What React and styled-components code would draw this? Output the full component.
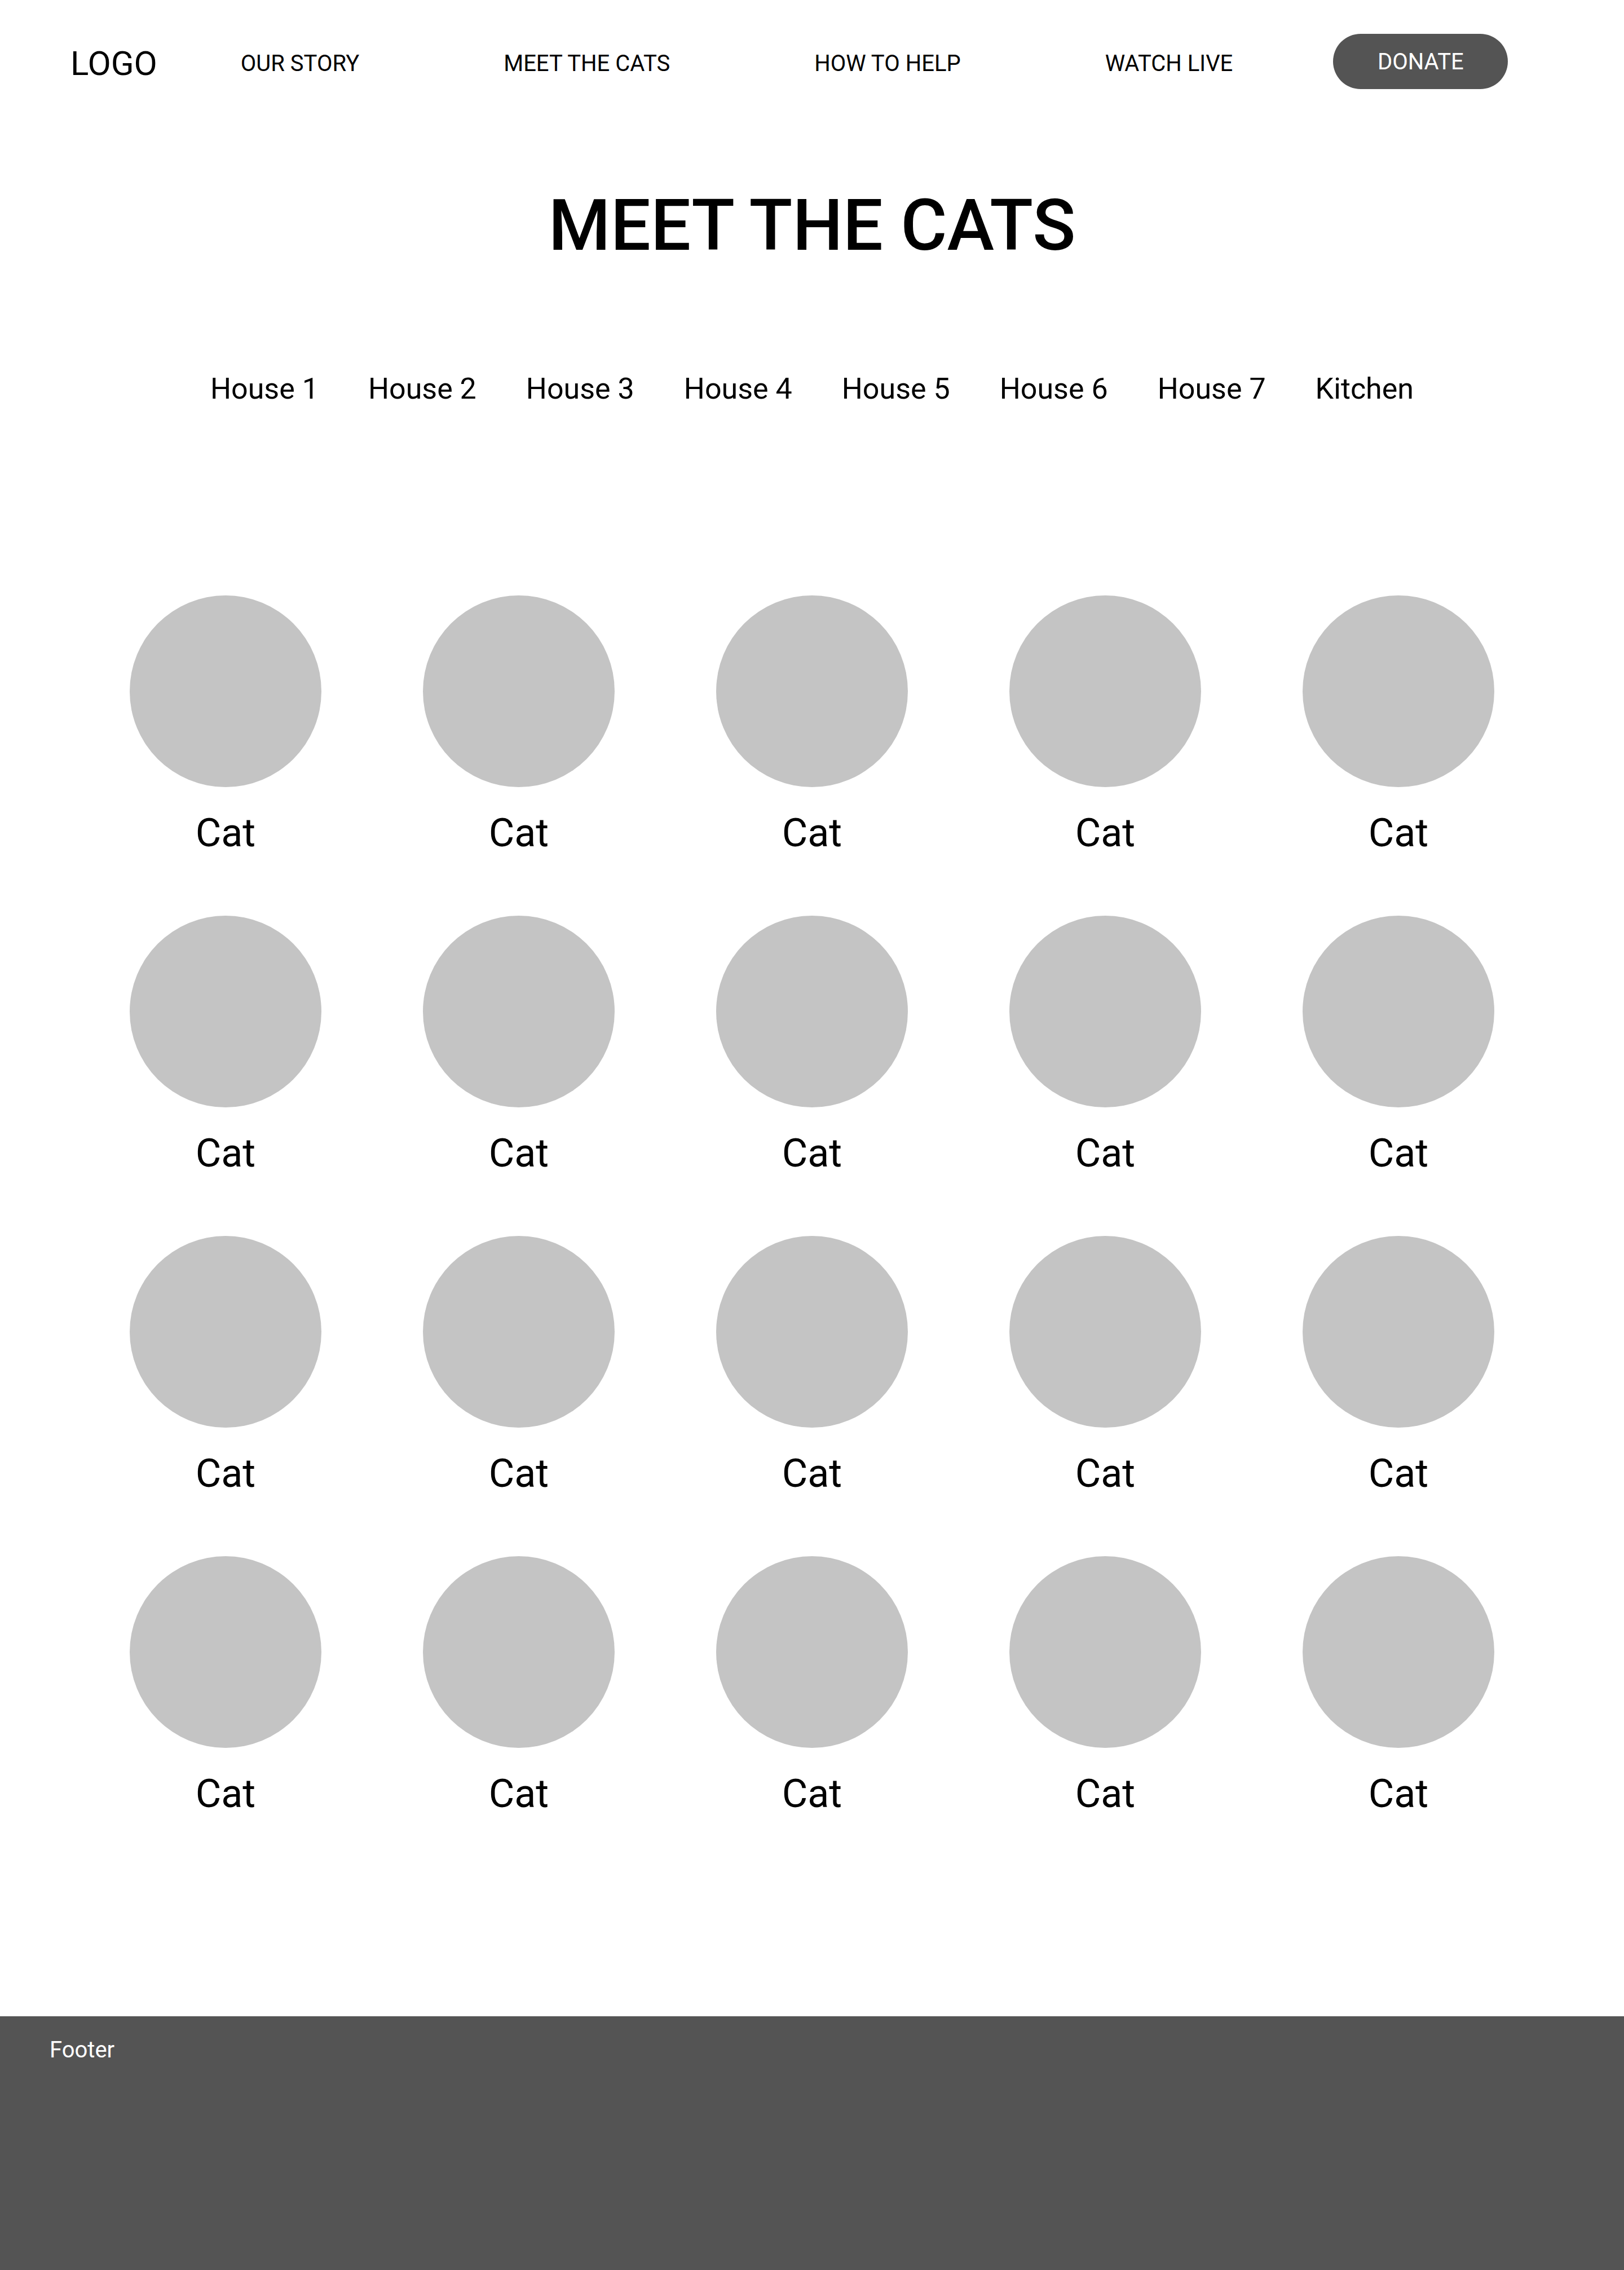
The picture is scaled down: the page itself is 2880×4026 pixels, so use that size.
import React from 'react'
import styled, { createGlobalStyle } from 'styled-components'

const GlobalStyle = createGlobalStyle`
    * { box-sizing: border-box; }
    body {
        margin: 0;
        background: #fff;
        font-family: Roboto, "Liberation Sans", Arial, sans-serif;
        color: #000;
    }
`;

const houses = ['House 1', 'House 2', 'House 3', 'House 4', 'House 5', 'House 6', 'House 7', 'Kitchen'];
const cats = Array.from({ length: 20 }, () => 'Cat');

const Page = styled.div`
    width: 2880px;
    min-height: 4026px;
    display: flex;
    flex-direction: column;
`;

const Header = styled.header`
    display: flex;
    align-items: center;
    height: 98px;
    margin-top: 60px;
    padding-left: 125px;
`;

const Logo = styled.div`
    font-size: 60px;
    font-weight: 400;
    margin-right: 148px;
    padding-top: 6px;
`;

const Nav = styled.nav`
    display: flex;
    gap: 256px;
    padding-top: 6px;
`;

const NavLink = styled.a`
    font-size: 40px;
    color: #000;
    text-decoration: none;
`;

const Donate = styled.button`
    margin-left: 178px;
    width: 310px;
    height: 98px;
    border: none;
    border-radius: 49px;
    background: #545454;
    color: #fff;
    font-family: inherit;
    font-size: 40px;
    font-weight: 400;
`;

const Title = styled.h1`
    margin: 168px 0 0;
    text-align: center;
    font-size: 126px;
    font-weight: 500;
`;

const Tabs = styled.div`
    display: flex;
    justify-content: center;
    gap: 88px;
    margin-top: 185px;
    font-size: 52px;
`;

const Grid = styled.div`
    display: grid;
    grid-template-columns: repeat(5, 340px);
    column-gap: 180px;
    row-gap: 106px;
    justify-content: center;
    margin-top: 336px;
`;

const Card = styled.div`
    display: flex;
    flex-direction: column;
    align-items: center;
`;

const Avatar = styled.div`
    width: 340px;
    height: 340px;
    border-radius: 50%;
    background: #c4c4c4;
`;

const Name = styled.div`
    margin-top: 40px;
    font-size: 70px;
`;

const Footer = styled.footer`
    margin-top: auto;
    height: 450px;
    background: #545454;
    color: #fff;
    font-size: 40px;
    padding: 36px 0 0 88px;
`;

const App = () => {
    return (
        <Page>
            <GlobalStyle />
            <Header>
                <Logo>LOGO</Logo>
                <Nav>
                    <NavLink>OUR STORY</NavLink>
                    <NavLink>MEET THE CATS</NavLink>
                    <NavLink>HOW TO HELP</NavLink>
                    <NavLink>WATCH LIVE</NavLink>
                </Nav>
                <Donate>DONATE</Donate>
            </Header>
            <Title>MEET THE CATS</Title>
            <Tabs>
                {houses.map((h) => (
                    <span key={h}>{h}</span>
                ))}
            </Tabs>
            <Grid>
                {cats.map((name, i) => (
                    <Card key={i}>
                        <Avatar />
                        <Name>{name}</Name>
                    </Card>
                ))}
            </Grid>
            <Footer>Footer</Footer>
        </Page>
    )
}

export default App
